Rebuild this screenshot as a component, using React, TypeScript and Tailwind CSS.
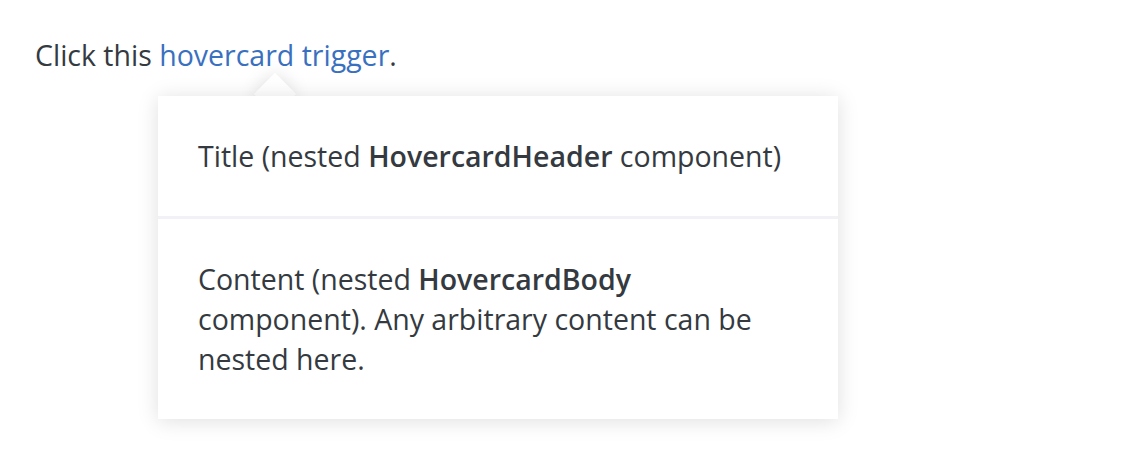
import React from "react";

export default function App() {
  return (
    <div
      className="relative h-[468px] w-[1136px] bg-white text-[#343a40]"
      style={{ fontFamily: '"Segoe UI", "Open Sans", "Noto Sans", sans-serif' }}
    >
      <div className="px-[35px] pt-[35px] text-[28.5px] leading-[40px]">
        Click this <span className="text-[#3a70c0]">hovercard trigger</span>.
      </div>
      <div className="absolute left-[158px] top-[96px] w-[680px]">
        <div className="absolute left-[102px] top-[-17px] h-[30px] w-[30px] rotate-45 bg-white shadow-[0_0_18px_rgba(0,0,0,0.13)]" />
        <div className="relative bg-white shadow-[0_2px_20px_rgba(0,0,0,0.13)]">
          <div className="p-[40px] text-[28.5px] leading-[40px]">
            Title (nested <b className="font-semibold">HovercardHeader</b> component)
          </div>
          <div className="h-[3px] bg-[#f2f2f6]" />
          <div className="p-[40px] text-[28.5px] leading-[40px]">
            Content (nested <b className="font-semibold">HovercardBody</b>
            <br />
            component). Any arbitrary content can be
            <br />
            nested here.
          </div>
        </div>
      </div>
    </div>
  );
}
